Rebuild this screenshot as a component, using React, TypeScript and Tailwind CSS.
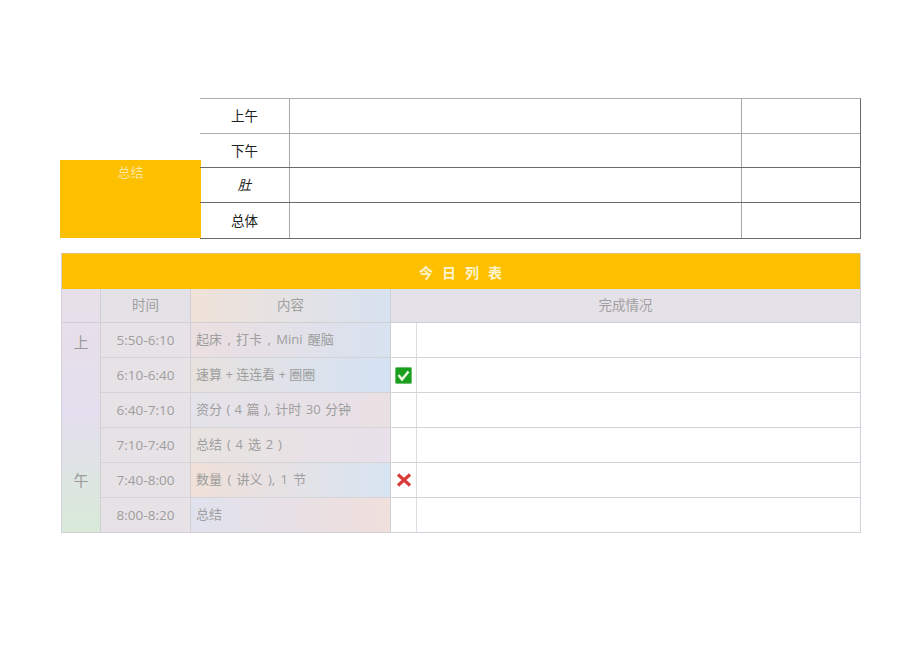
const cjk = "font-['Open_Sans','Noto_Sans_CJK_SC',sans-serif]";

const summaryRows = [
  { label: "上午", line: "border-[#b0adb0]", height: "h-[35px]" },
  { label: "下午", line: "border-[#6a6a6a]", height: "h-[34px]" },
  { label: "肚", line: "border-[#6a6a6a]", height: "h-[35px]", italic: true },
  { label: "总体", line: "border-[#6a6a6a]", height: "h-[36px]" },
];

const planRows = [
  { time: "5:50-6:10", task: "起床 , 打卡 , Mini 醒脑", gap: "[word-spacing:2px]", bg: "bg-gradient-to-r from-[#ecdfe0] to-[#d8e2f0]", mark: "" },
  { time: "6:10-6:40", task: "速算 + 连连看 + 圈圈", gap: "", bg: "bg-gradient-to-r from-[#e8e2de] to-[#d4e2f4]", mark: "check" },
  { time: "6:40-7:10", task: "资分 ( 4 篇 ), 计时 30 分钟", gap: "[word-spacing:1px]", bg: "bg-gradient-to-r from-[#e4e2ea] to-[#eae0e4]", mark: "" },
  { time: "7:10-7:40", task: "总结 ( 4 选 2 )", gap: "[word-spacing:1.5px]", bg: "bg-gradient-to-r from-[#e8e4e0] to-[#e8e0ea]", mark: "" },
  { time: "7:40-8:00", task: "数量 ( 讲义 ), 1 节", gap: "[word-spacing:2px]", bg: "bg-gradient-to-r from-[#f0e0d8] to-[#d8e4f2]", mark: "cross" },
  { time: "8:00-8:20", task: "总结", gap: "", bg: "bg-gradient-to-r from-[#e0e2ee] to-[#f0dfdc]", mark: "" },
];

function CheckMark() {
  return (
    <svg width="17" height="17" viewBox="0 0 17 17">
      <rect x="0.5" y="0.5" width="16" height="16" rx="1" fill="#1a9e1e" stroke="#6fbf6f" />
      <path d="M3.5 8 L7 12.5 L13.5 4.5" fill="none" stroke="#e8f8e0" strokeWidth="2.6" />
    </svg>
  );
}

function CrossMark() {
  return (
    <svg width="16" height="14" viewBox="0 0 16 14">
      <path d="M2 1.5 L14 12.5 M14 1.5 L2 12.5" fill="none" stroke="#d93a3a" strokeWidth="3.2" />
    </svg>
  );
}

export default function App() {
  return (
    <div className={`w-[920px] h-[651px] bg-white pt-[98px] pl-[60px] text-[13.5px] ${cjk}`}>
      <div className="flex items-end w-[801px]">
        <div className="w-[141px] h-[78px] mb-px bg-[#fcc000] text-center text-[13px] leading-[25px] text-[#fbe6a0]">总结</div>
        <div className="-ml-px flex-1 border-r border-[#6a6a6a] border-t border-t-[#b0adb0]">
          {summaryRows.map((r) => (
            <div key={r.label} className={`flex ${r.height} border-b ${r.line}`}>
              <div className={`w-[89px] pt-px flex items-center justify-center text-[#222] ${r.italic ? "italic" : ""}`}>{r.label}</div>
              <div className="flex-1 border-l border-r border-[#a8a8a8]" />
              <div className="w-[118px]" />
            </div>
          ))}
        </div>
      </div>

      <div className="mt-[14px] ml-px w-[800px] border-x border-b border-[#d4d0dc]">
        <div className="h-[36px] pt-[1px] pl-[8px] bg-[#fdc000] border-t border-[#e8c070] flex items-center justify-center text-[14px] text-[#fdf3cc] font-bold tracking-[9px]">今日列表</div>
        <div className="grid grid-cols-[39px_1fr]">
          <div className="flex flex-col bg-gradient-to-b from-[#e8e0e8] via-[#e4deee] to-[#d8ead8] border-r border-[#d0d0d4]">
            <div className="h-[34px] border-b border-[#d0d0d4]" />
            <div className="h-[38px] flex items-center justify-center text-[15px] text-[#9a9a9a]">上</div>
            <div className="h-[100px]" />
            <div className="h-[38px] flex items-center justify-center text-[15px] text-[#9a9a9a]">午</div>
          </div>
          <div>
            <div className="flex h-[34px] text-[#a0a0a0] border-b border-[#d0d0d4]">
              <div className="w-[90px] flex items-center justify-center border-r border-[#d0d0d4] bg-[#e4e2e6]">时间</div>
              <div className="w-[200px] flex items-center justify-center border-r border-[#d0d0d4] bg-gradient-to-r from-[#f0e2d8] to-[#d8e2f0]">内容</div>
              <div className="flex-1 flex items-center justify-center bg-[#e5e1e8]">完成情况</div>
            </div>
            {planRows.map((r, i) => (
              <div key={r.time} className={`flex text-[#9e9e9e] ${i < 5 ? "h-[35px] border-b border-[#d4d4d8]" : "h-[34px]"}`}>
                <div className="w-[90px] flex items-center justify-center border-r border-[#d0d0d4] bg-[#e6e2e6]">{r.time}</div>
                <div className={`w-[200px] flex items-center pl-[5px] text-[13px] border-r border-[#d0d0d4] ${r.gap} ${r.bg}`}>{r.task}</div>
                <div className="w-[26px] flex items-center justify-center border-r border-[#dcdce4]">
                  {r.mark === "check" && <CheckMark />}
                  {r.mark === "cross" && <CrossMark />}
                </div>
                <div className="flex-1" />
              </div>
            ))}
          </div>
        </div>
      </div>
    </div>
  );
}
